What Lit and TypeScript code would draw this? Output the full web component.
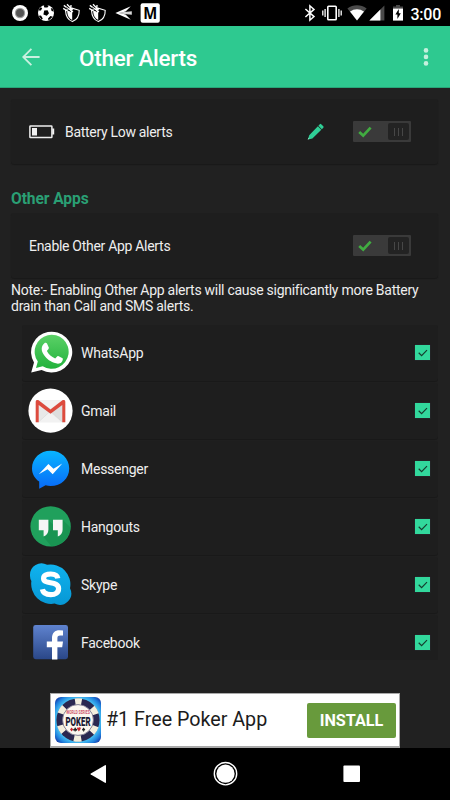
import { LitElement, html, css, svg, TemplateResult } from "lit";
import { customElement, property, state } from "lit/decorators.js";

type Glyph = { w: number; h: number; body: TemplateResult };

const shield = svg`
  <path d="M3.5 7.5 10 5.2 17.2 7.3 C17.4 12.6 15.4 16.6 10.4 18.6 C6 17 3.8 13 3.5 7.5Z" fill="none" stroke="#fff" stroke-width="1.1"/>
  <path d="M10.2 7.2 5.2 9 C5.6 13 7.2 15.6 10.2 17Z" fill="#fff"/>
  <path d="M1.8 2.4 11 9 M5 1.2 10.6 7 M1.2 5.4 9.5 10.5 M9 2 8.8 7" stroke="#fff" stroke-width="1.3" fill="none"/>
  <path d="M4 4.6 9 9" stroke="#000" stroke-width=".7"/>`;

const glyphs: Record<string, Glyph> = {
  record: { w: 20, h: 20, body: svg`
    <circle cx="10" cy="10" r="8" fill="#fff"/><circle cx="10" cy="10" r="5.2" fill="#a0a0a0"/><circle cx="10" cy="10" r="4" fill="#555"/>` },
  soccer: { w: 20, h: 20, body: svg`
    <circle cx="10" cy="10" r="8" fill="#fff"/>
    <path d="M8.2 7.4 11.6 7.2 13 10.2 10.8 12.8 7.4 11.4Z M7.6 2.2 8.4 4.4 11.4 4.6 12.8 2.8 10.4 1.8Z M2.4 7.4 5 7.6 6.2 5 4.4 4.2Z M17.8 8.6 15.6 8 14.8 5 16.6 5.8Z M2.6 12.8 5 12.6 6.8 15.4 5.6 16.8Z M16.8 13.8 14.4 13 12 15.4 12.6 17.6Z" fill="#000"/>` },
  shield: { w: 20, h: 20, body: shield },
  plane: { w: 20, h: 20, body: svg`
    <path d="M1.4 10 16.8 3.2 11.6 8.6 5.6 10 11.6 11.4 16.8 16.8Z" fill="#fff"/><path d="M5 9.4 17.8 8.2V11.8L5 10.6Z" fill="#d8d8d8"/>` },
  letter: { w: 20, h: 20, body: svg`
    <rect x=".6" y=".3" width="19.2" height="19.4" rx="2" fill="#fff"/>
    <text x="10.2" y="16" text-anchor="middle" font-family="Noto Sans" font-weight="700" font-size="16.4" fill="#000" textLength="14" lengthAdjust="spacingAndGlyphs">M</text>` },
  bluetooth: { w: 12, h: 18, body: svg`
    <path d="M1.4 5 10 12.6 5.9 16.2V1.8L10 5.4 1.4 13" fill="none" stroke="#fff" stroke-width="1.5"/>` },
  vibrate: { w: 20, h: 16, body: svg`
    <rect x="5.8" y="1.2" width="8.4" height="13.6" rx=".8" fill="none" stroke="#fff" stroke-width="1.6"/>
    <path d="M3.1 4V12M.8 5.6V10.4M16.9 4V12M19.2 5.6V10.4" stroke="#fff" stroke-width="1.3"/>` },
  wifi: { w: 20, h: 16, body: svg`
    <path d="M10 15.6.4 3.6C6-.8 14-.8 19.6 3.6Z" fill="#4a4a4a"/><path d="M10 15.6 3 6.6C7 3.3 13 3.3 17 6.6Z" fill="#fff"/>` },
  signal: { w: 16, h: 16, body: svg`
    <path d="M15.4.6V15.6H.4Z" fill="#4a4a4a"/><path d="M11.4 4.6V15.6H.4Z" fill="#fff"/>` },
  charge: { w: 10, h: 16, body: svg`
    <path d="M3 0H7V1.6H10V4H0V1.6H3Z" fill="#4a4a4a"/><path d="M0 3.6H10V15.6H0Z" fill="#fff"/>
    <path d="M5.8 4 2.4 9.6H4.4V14L7.8 8.2H5.8Z" fill="#000"/>` },
  back: { w: 18, h: 18, body: svg`
    <path d="M17.6 9H1.4M9.4.8 1.2 9 9.4 17.2" fill="none" stroke="#c9f0e0" stroke-width="1.8"/>` },
  more: { w: 6, h: 20, body: svg`
    <g fill="#c5f0de"><circle cx="3" cy="3.4" r="2.3"/><circle cx="3" cy="9.9" r="2.3"/><circle cx="3" cy="16.4" r="2.3"/></g>` },
  battery: { w: 26, h: 14, body: svg`
    <rect x=".9" y=".9" width="22" height="11.6" rx=".6" fill="none" stroke="#eee" stroke-width="1.5"/>
    <path d="M3 3H8V10.6H3Z M23.2 3.6H25.2V9.6H23.2Z" fill="#f2f2f2"/>` },
  pencil: { w: 18, h: 18, body: svg`
    <path d="M1 16.4 2.2 12.2 10.9 3.3 14.3 6.7 5.4 15.4Z M11.4 2.8 12.8 1.2Q13.5.5 14.2 1.2L16.3 3.3Q17 4 16.3 4.7L14.8 6.2Z" fill="#2fce96"/>
    <path d="M1.2 16.4 2 14.8" stroke="#9be8cb" stroke-width=".9"/>` },
  tick: { w: 14, h: 12, body: svg`
    <path d="M1.2 6 5.2 9.6 12.6 1.6" fill="none" stroke="#41ac41" stroke-width="2.7"/>` },
  check: { w: 17, h: 17, body: svg`
    <rect x=".5" y=".5" width="16" height="16" fill="#32d89c" stroke="#221019" stroke-width=".8"/>
    <path d="M4.7 8.8 7.6 11.6 13 6.2" fill="none" stroke="#163c2e" stroke-width="1.2"/>` },
  whatsapp: { w: 46, h: 46, body: svg`
    <path d="M3.2 42.6 6 32.6A20.6 20.4 0 1 1 13.6 39.9Z" fill="#fff"/>
    <path d="M8 37.9 9.8 31.6A17 17 0 1 1 14.7 36.2Z" fill="url(#wa)"/>
    <path d="M16.4 13.2C17 12.7 18.5 12.6 19 13.4L20.9 17.7C21.1 18.7 19.3 20.2 18.9 21 C20.8 24.6 23.4 26.9 27.2 28.4 C28.3 27.7 29.2 25.7 30.2 26L34.6 28.2C35.3 29 34.4 32.4 32 33.3 C29.3 34.4 25.2 32.8 22.4 31.1 C18.6 28.8 14.5 23.8 13.8 20.2 C13.3 17.2 14.7 14.4 16.4 13.2Z" fill="#fff"/>
    <defs><linearGradient id="wa" x2="0" y2="1"><stop stop-color="#5bd167"/><stop offset="1" stop-color="#22b23c"/></linearGradient></defs>` },
  gmail: { w: 46, h: 46, body: svg`
    <circle cx="22.5" cy="22.7" r="22.1" fill="#fff"/>
    <g transform="translate(-.5 0)"><path d="M8.4 12.2H37.6V34.3H8.4Z" fill="#e8e8e8"/>
    <path d="M11 34 23 23 35 34" fill="#f2f2f2" stroke="#d7d7d7" stroke-width=".6"/>
    <path d="M11 14 34 34H37.6V16Z" fill="#d8d8d8" opacity=".65"/>
    <path d="M11.3 12.2H34.7L23 21Z" fill="#f3f3f3"/>
    <path d="M8.2 34.2V14C8.2 12 10 11.7 11.4 12.6L23 21.4 34.6 12.6C36 11.7 37.8 12 37.8 14V34.2H34.8V17L23 25.7 11.2 17V34.2Z" fill="#dd4b3e"/></g>` },
  messenger: { w: 46, h: 46, body: svg`
    <path d="M22.6 4.8C33.2 4.8 41.2 12.4 41.2 22.4 S33.2 40 22.6 40C20.8 40 19.2 39.8 17.6 39.3L11.2 42.8V35.6C6.8 32.4 4 28 4 22.4 4 12.4 12 4.8 22.6 4.8Z" fill="url(#ms)"/>
    <path d="M10.8 28.2 20.4 18 25.5 22.7 34.3 17.5 24.7 28.3 19.6 23.3Z" fill="#fff"/>
    <defs><linearGradient id="ms" x2="0" y2="1"><stop stop-color="#08b5ff"/><stop offset="1" stop-color="#0869f8"/></linearGradient></defs>` },
  hangouts: { w: 46, h: 46, body: svg`
    <g transform="translate(-.4 0)"><circle cx="23" cy="22.4" r="20.2" fill="#20a05c"/>
    <path d="M20.8 16 26 21.2V16H35.2L42.9 23.6C42 33 35 41.6 24 42.6L15.5 32.6Z" fill="#17904f" opacity=".75"/>
    <path d="M11.2 15.8H20.8V25.8C20.8 29.2 18.8 31.4 16 32.4V26.2H11.2Z M25.4 15.8H35V25.8C35 29.2 33 31.4 30.2 32.4V26.2H25.4Z" fill="#f5f5f5"/></g>` },
  skype: { w: 46, h: 46, body: svg`
    <g transform="translate(-.4 -.4)"><path d="M2.4 13.5A11.5 11.5 0 0 1 19.5 3.2 A19.8 19.8 0 0 1 42.4 26.6 A11.5 11.5 0 0 1 27 42 A20 20 0 0 1 3.8 19.4 A11 11 0 0 1 2.4 13.5Z" fill="url(#sk)"/>
    <path d="M30.2 16.7C29.8 13.9 27 12.4 23.2 12.4 19.2 12.4 16 13.9 16 16.8 16 23.3 31 18.8 31 26.8 31 31.2 27.6 33 23.2 33 18.5 33 15.4 31.2 14.8 27.7" fill="none" stroke="#fff" stroke-width="5.2"/></g>
    <defs><linearGradient id="sk" gradientUnits="userSpaceOnUse" x1="0" y1="2" x2="0" y2="44"><stop stop-color="#10b3ef"/><stop offset="1" stop-color="#0797d4"/></linearGradient></defs>` },
  facebook: { w: 46, h: 46, body: svg`
    <rect x="5.2" y="5" width="34.8" height="34.2" rx="2.4" fill="url(#fb)"/>
    <path d="M24 39.4V27.2H18.8V21.6H24V18C24 12.8 27 10.2 31.4 10.2L35 10.4V15.6H32.2C30 15.6 29.4 16.6 29.4 18.4V21.6H35L34.2 27.2H29.4V39.4Z" fill="#fff"/>
    <defs><linearGradient id="fb" x2="0" y2="1"><stop stop-color="#5f83cf"/><stop offset="1" stop-color="#2a4788"/></linearGradient></defs>` },
  poker: { w: 46, h: 46, body: svg`
    <defs>
      <radialGradient id="pk" r=".68"><stop offset=".68" stop-color="#48c4f4"/><stop offset=".85" stop-color="#1f7fdc"/><stop offset="1" stop-color="#12279a"/></radialGradient>
      <clipPath id="pc"><rect width="46" height="46" rx="6"/></clipPath>
    </defs>
    <g clip-path="url(#pc)">
      <rect width="46" height="46" fill="url(#pk)"/>
      <circle cx="23" cy="23" r="21.6" fill="#2a2850"/>
      <circle cx="23" cy="23" r="18.6" fill="none" stroke="#f3eedd" stroke-width="6.4" stroke-dasharray="7.4 12.08" stroke-dashoffset="3.7" transform="rotate(-90 23 23)"/>
      <circle cx="23" cy="23" r="15.4" fill="#fbf7f0" stroke="#77758c" stroke-width=".8"/>
    </g>
    <rect x="10.4" y="17.6" width="25.2" height="12" fill="#fbf7f0"/>
    <text x="23" y="17.4" text-anchor="middle" font-family="Roboto" font-weight="700" font-size="4.6" fill="#d0526a" textLength="23.6" lengthAdjust="spacingAndGlyphs">WORLD SERIES</text>
    <text x="23" y="29" text-anchor="middle" font-family="Roboto" font-weight="900" font-size="13.6" fill="#1d1b35" textLength="25" lengthAdjust="spacingAndGlyphs">POKER</text>
    <path d="M16.6 30.4 18.2 32.4 16.6 34.4 15 32.4Z M23.4 31.1C24 29.6 26.4 30.4 25.6 32L23.9 34.4 22.2 32C21.4 30.4 23.4 29.8 23.9 31.1Z" fill="#c8252d"/>
    <path d="M20.2 30.4A1 1 0 0 1 20.8 31.9 A1 1 0 1 1 20.5 33.4L20.8 34.4H19.6L19.9 33.4A1 1 0 1 1 19.6 31.9 A1 1 0 0 1 20.2 30.4Z M28.6 30.4 30.2 32.6Q30.2 34 28.9 33.4L29.2 34.4H28L28.3 33.4Q27 34 27 32.6Z" fill="#222"/>` },
  navBack: { w: 18, h: 20, body: svg`<path d="M15 1.2Q16 .8 16 2V18Q16 19.2 15 18.8L.8 10.6Q0 10 .8 9.4Z" fill="#fff"/>` },
  navHome: { w: 26, h: 26, body: svg`<circle cx="12.5" cy="12.7" r="11.2" fill="none" stroke="#fff" stroke-width="1.4"/><circle cx="12.5" cy="12.7" r="9.1" fill="#fff"/>` },
  navRecent: { w: 18, h: 18, body: svg`<rect x=".4" y=".4" width="16.6" height="16.6" rx="1" fill="#fff"/>` },
};

@customElement("app-glyph")
export class AppGlyph extends LitElement {
  static styles = css`
    :host { display: block; flex: none; }
    svg { display: block; }
  `;
  @property() name = "";
  render() {
    const g = glyphs[this.name];
    return html`<svg width=${g.w} height=${g.h} viewBox="0 0 ${g.w} ${g.h}">${g.body}</svg>`;
  }
}

@customElement("app-switch")
export class AppSwitch extends LitElement {
  static styles = css`
    :host { display: block; flex: none; }
    .track { width: 58px; height: 21px; box-sizing: border-box; padding: 0 2px 0 5px; background: #3a3a3a; border-radius: 1px; display: flex; align-items: center; justify-content: space-between; }
    .thumb { width: 21px; height: 17px; background: #232323; border-radius: 2px; display: flex; align-items: center; justify-content: center; gap: 3px; }
    .grip { width: 1px; height: 8px; background: #474747; }
  `;
  render() {
    return html`<div class="track">
      <app-glyph name="tick"></app-glyph>
      <div class="thumb"><i class="grip"></i><i class="grip"></i><i class="grip"></i></div>
    </div>`;
  }
}

@customElement("app-root")
export class AppRoot extends LitElement {
  static styles = css`
    :host { display: block; width: 450px; height: 800px; overflow: hidden; font-family: Roboto, sans-serif; color: #eee; background: #212121; }
    .screen { height: 800px; display: flex; flex-direction: column; }
    .status { height: 26px; flex: none; box-sizing: border-box; background: #000; display: flex; align-items: center; padding: 0 9px 0 10px; }
    .notes { display: flex; gap: 6px; flex: 1; }
    .system { display: flex; align-items: center; }
    .vib { margin-left: 6px; }
    .wifi { margin-left: 5px; }
    .signal { margin-left: 2px; }
    .charge { margin-left: 8px; }
    .time { margin-left: 8px; margin-top: 2px; font-size: 16px; font-weight: 500; color: #fff; letter-spacing: -0.25px; }
    .bar { height: 62px; flex: none; box-sizing: border-box; background: #2ec990; border-bottom: 1px solid #27a678; display: flex; align-items: center; padding: 0 21px 0 22px; }
    .title { flex: 1; margin-left: 39px; margin-top: 2px; font-size: 22.4px; font-weight: 500; color: #fff; letter-spacing: -0.22px; }
    .content { flex: 1; min-height: 0; display: flex; flex-direction: column; padding: 11px 12px 0 11px; }
    .card { background: #1e1e1e; border-radius: 3px; box-shadow: 0 1px 1px #191919; display: flex; align-items: center; flex: none; }
    .setting { height: 65px; box-sizing: border-box; padding: 0 27px 0 18px; font-size: 14px; letter-spacing: -0.3px; }
    .grow { flex: 1; }
    .bat { margin-right: 10px; }
    .pen { margin-right: 28px; }
    .section { margin: 26px 0 4px; line-height: 19px; font-size: 15.6px; font-weight: 700; letter-spacing: -0.1px; color: #2a9f74; }
    .note { margin-top: 4px; font-size: 14px; letter-spacing: -0.27px; line-height: 16px; white-space: nowrap; }
    .list { height: 335px; overflow: hidden; margin: 11px 0 0 11px; display: flex; flex-direction: column; gap: 2px; }
    .app { height: 56px; box-sizing: border-box; padding: 0 7px 0 6px; font-size: 14px; letter-spacing: -0.25px; }
    .app .grow { margin-left: 7px; }
    .app .box { margin-bottom: 1px; }
    .ad { width: 350px; height: 55px; flex: none; box-sizing: border-box; align-self: center; background: #fff; border: 1px solid #a9a9a9; border-bottom-width: 2px; display: flex; align-items: center; padding: 0 3px 0 3.5px; color: #1c1c1c; }
    .slogan { flex: 1; margin-left: 5.5px; margin-top: -1px; font-size: 19.7px; white-space: nowrap; }
    .install { width: 89px; height: 35px; border-radius: 2px; background: #689a3c; color: #fff; font-size: 16.2px; font-weight: 700; display: flex; align-items: center; justify-content: center; }
    .nav { height: 52px; flex: none; background: #000; display: flex; align-items: center; justify-content: space-between; padding: 0 89px 0 90px; }
  `;

  @state() private apps = [
    { icon: "whatsapp", label: "WhatsApp" },
    { icon: "gmail", label: "Gmail" },
    { icon: "messenger", label: "Messenger" },
    { icon: "hangouts", label: "Hangouts" },
    { icon: "skype", label: "Skype" },
    { icon: "facebook", label: "Facebook" },
  ];

  render() {
    return html`<div class="screen">
      <div class="status">
        <div class="notes">
          ${["record", "soccer", "shield", "shield", "plane", "letter"].map((n) => html`<app-glyph name=${n}></app-glyph>`)}
        </div>
        <div class="system">
          <app-glyph name="bluetooth"></app-glyph>
          <app-glyph class="vib" name="vibrate"></app-glyph>
          <app-glyph class="wifi" name="wifi"></app-glyph>
          <app-glyph class="signal" name="signal"></app-glyph>
          <app-glyph class="charge" name="charge"></app-glyph>
          <span class="time">3:00</span>
        </div>
      </div>
      <div class="bar">
        <app-glyph name="back"></app-glyph>
        <span class="title">Other Alerts</span>
        <app-glyph name="more"></app-glyph>
      </div>
      <div class="content">
        <div class="card setting">
          <app-glyph class="bat" name="battery"></app-glyph>
          <span class="grow">Battery Low alerts</span>
          <app-glyph class="pen" name="pencil"></app-glyph>
          <app-switch></app-switch>
        </div>
        <div class="section">Other Apps</div>
        <div class="card setting">
          <span class="grow">Enable Other App Alerts</span>
          <app-switch></app-switch>
        </div>
        <div class="note">Note:- Enabling Other App alerts will cause significantly more Battery<br />drain than Call and SMS alerts.</div>
        <div class="list">
          ${this.apps.map((a) => html`<div class="card app">
            <app-glyph name=${a.icon}></app-glyph>
            <span class="grow">${a.label}</span>
            <app-glyph class="box" name="check"></app-glyph>
          </div>`)}
        </div>
      </div>
      <div class="ad">
        <app-glyph name="poker"></app-glyph>
        <span class="slogan">#1 Free Poker App</span>
        <div class="install">INSTALL</div>
      </div>
      <div class="nav">
        <app-glyph name="navBack"></app-glyph>
        <app-glyph name="navHome"></app-glyph>
        <app-glyph name="navRecent"></app-glyph>
      </div>
    </div>`;
  }
}
